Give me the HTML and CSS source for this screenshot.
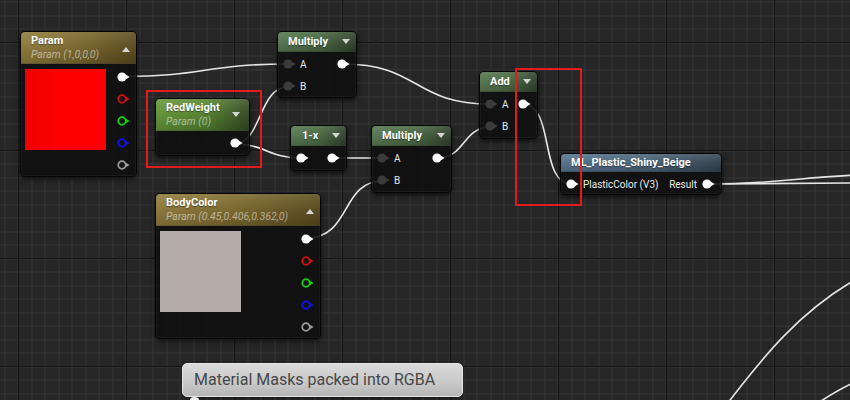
FILE: index.html
```html
<!DOCTYPE html>
<html>
<head>
<meta charset="utf-8">
<link rel="stylesheet" href="styles.css">
</head>
<body>
<div class="graph">
  <svg class="wires" width="850" height="400" viewBox="0 0 850 400">
    <g fill="none" stroke="#e6e6e6" stroke-width="1.6" stroke-linecap="round">
      <path d="M123,76.5 C205,76.5 205,64 288,64"/>
      <path d="M234,144 C262,144 258,87 288,87"/>
      <path d="M234,144 C266,144 268,158 301,158"/>
      <path d="M343,64 C420,64 412,104 491,104"/>
      <path d="M332,158 L383,158"/>
      <path d="M306,238 C352,238 340,181 383,181"/>
      <path d="M437,158 C466,158 462,127 491,127"/>
      <path d="M522,104 C556,104 538,184 572,184"/>
      <path d="M707,184 L860,183"/>
      <path d="M707,184 C780,184 800,177 860,175"/>
      <path d="M724,408 C762,358 800,310 860,277"/>
      <path d="M815,405 C830,395 845,386 860,380"/>
    </g>
  </svg>

  <div class="node big n-param">
    <div class="head tall gold">
      <div class="htext">
        <div class="title">Param</div>
        <div class="sub">Param (1,0,0,0)</div>
      </div>
      <span class="tri up"></span>
    </div>
    <div class="body swatchbody">
      <div class="swatch sw-red"></div>
      <div class="outs">
        <div class="prow"><svg class="pin" viewBox="0 0 13 10" width="13" height="10"><circle cx="5" cy="5" r="4.6" fill="#fff"/><path d="M9 2.8 L12.6 5 L9 7.2Z" fill="#fff"/></svg></div>
        <div class="prow"><svg class="pin" viewBox="0 0 13 10" width="13" height="10"><circle cx="5" cy="5" r="3.8" fill="#141414" stroke="#d01010" stroke-width="1.7"/><path d="M9 2.8 L12.6 5 L9 7.2Z" fill="#d01010"/></svg></div>
        <div class="prow"><svg class="pin" viewBox="0 0 13 10" width="13" height="10"><circle cx="5" cy="5" r="3.8" fill="#141414" stroke="#14d010" stroke-width="1.7"/><path d="M9 2.8 L12.6 5 L9 7.2Z" fill="#14d010"/></svg></div>
        <div class="prow"><svg class="pin" viewBox="0 0 13 10" width="13" height="10"><circle cx="5" cy="5" r="3.8" fill="#141414" stroke="#1010e0" stroke-width="1.7"/><path d="M9 2.8 L12.6 5 L9 7.2Z" fill="#1010e0"/></svg></div>
        <div class="prow"><svg class="pin" viewBox="0 0 13 10" width="13" height="10"><circle cx="5" cy="5" r="3.8" fill="#141414" stroke="#9a9a9a" stroke-width="1.7"/><path d="M9 2.8 L12.6 5 L9 7.2Z" fill="#9a9a9a"/></svg></div>
      </div>
    </div>
  </div>

  <div class="node n-red">
    <div class="head tall green">
      <div class="htext">
        <div class="title">RedWeight</div>
        <div class="sub">Param (0)</div>
      </div>
      <span class="tri down"></span>
    </div>
    <div class="body rows">
      <div class="row"><span class="spacer"></span><svg class="pin" viewBox="0 0 13 10" width="13" height="10"><circle cx="5" cy="5" r="4.6" fill="#fff"/><path d="M9 2.8 L12.6 5 L9 7.2Z" fill="#fff"/></svg></div>
    </div>
  </div>

  <div class="node n-mul1">
    <div class="head math">
      <div class="title">Multiply</div>
      <span class="tri down"></span>
    </div>
    <div class="body rows">
      <div class="row"><svg class="pin" viewBox="0 0 13 10" width="13" height="10"><circle cx="5" cy="5" r="4.6" fill="#3b3b3b"/><path d="M9 2.8 L12.6 5 L9 7.2Z" fill="#3b3b3b"/></svg><span class="lbl">A</span><span class="spacer"></span><svg class="pin" viewBox="0 0 13 10" width="13" height="10"><circle cx="5" cy="5" r="4.6" fill="#fff"/><path d="M9 2.8 L12.6 5 L9 7.2Z" fill="#fff"/></svg></div>
      <div class="row"><svg class="pin" viewBox="0 0 13 10" width="13" height="10"><circle cx="5" cy="5" r="4.6" fill="#3b3b3b"/><path d="M9 2.8 L12.6 5 L9 7.2Z" fill="#3b3b3b"/></svg><span class="lbl">B</span></div>
    </div>
  </div>

  <div class="node n-onex">
    <div class="head math">
      <div class="title">1-x</div>
      <span class="tri down"></span>
    </div>
    <div class="body rows">
      <div class="row"><svg class="pin" viewBox="0 0 13 10" width="13" height="10"><circle cx="5" cy="5" r="4.6" fill="#fff"/><path d="M9 2.8 L12.6 5 L9 7.2Z" fill="#fff"/></svg><span class="spacer"></span><svg class="pin" viewBox="0 0 13 10" width="13" height="10"><circle cx="5" cy="5" r="4.6" fill="#fff"/><path d="M9 2.8 L12.6 5 L9 7.2Z" fill="#fff"/></svg></div>
    </div>
  </div>

  <div class="node n-mul2">
    <div class="head math">
      <div class="title">Multiply</div>
      <span class="tri down"></span>
    </div>
    <div class="body rows">
      <div class="row"><svg class="pin" viewBox="0 0 13 10" width="13" height="10"><circle cx="5" cy="5" r="4.6" fill="#3b3b3b"/><path d="M9 2.8 L12.6 5 L9 7.2Z" fill="#3b3b3b"/></svg><span class="lbl">A</span><span class="spacer"></span><svg class="pin" viewBox="0 0 13 10" width="13" height="10"><circle cx="5" cy="5" r="4.6" fill="#fff"/><path d="M9 2.8 L12.6 5 L9 7.2Z" fill="#fff"/></svg></div>
      <div class="row"><svg class="pin" viewBox="0 0 13 10" width="13" height="10"><circle cx="5" cy="5" r="4.6" fill="#3b3b3b"/><path d="M9 2.8 L12.6 5 L9 7.2Z" fill="#3b3b3b"/></svg><span class="lbl">B</span></div>
    </div>
  </div>

  <div class="node n-add">
    <div class="head math">
      <div class="title">Add</div>
      <span class="tri down"></span>
    </div>
    <div class="body rows">
      <div class="row"><svg class="pin" viewBox="0 0 13 10" width="13" height="10"><circle cx="5" cy="5" r="4.6" fill="#3b3b3b"/><path d="M9 2.8 L12.6 5 L9 7.2Z" fill="#3b3b3b"/></svg><span class="lbl">A</span><span class="spacer"></span><svg class="pin" viewBox="0 0 13 10" width="13" height="10"><circle cx="5" cy="5" r="4.6" fill="#fff"/><path d="M9 2.8 L12.6 5 L9 7.2Z" fill="#fff"/></svg></div>
      <div class="row"><svg class="pin" viewBox="0 0 13 10" width="13" height="10"><circle cx="5" cy="5" r="4.6" fill="#3b3b3b"/><path d="M9 2.8 L12.6 5 L9 7.2Z" fill="#3b3b3b"/></svg><span class="lbl">B</span></div>
    </div>
  </div>

  <div class="node n-ml">
    <div class="head short func">
      <div class="title">ML_Plastic_Shiny_Beige</div>
    </div>
    <div class="body rows">
      <div class="row"><svg class="pin" viewBox="0 0 13 10" width="13" height="10"><circle cx="5" cy="5" r="4.6" fill="#fff"/><path d="M9 2.8 L12.6 5 L9 7.2Z" fill="#fff"/></svg><span class="lbl">PlasticColor (V3)</span><span class="spacer"></span><span class="lbl rl">Result</span><svg class="pin" viewBox="0 0 13 10" width="13" height="10"><circle cx="5" cy="5" r="4.6" fill="#fff"/><path d="M9 2.8 L12.6 5 L9 7.2Z" fill="#fff"/></svg></div>
    </div>
  </div>

  <div class="node big n-body">
    <div class="head tall gold">
      <div class="htext">
        <div class="title">BodyColor</div>
        <div class="sub">Param (0.45,0.406,0.362,0)</div>
      </div>
      <span class="tri up"></span>
    </div>
    <div class="body swatchbody">
      <div class="swatch sw-beige"></div>
      <div class="outs">
        <div class="prow"><svg class="pin" viewBox="0 0 13 10" width="13" height="10"><circle cx="5" cy="5" r="4.6" fill="#fff"/><path d="M9 2.8 L12.6 5 L9 7.2Z" fill="#fff"/></svg></div>
        <div class="prow"><svg class="pin" viewBox="0 0 13 10" width="13" height="10"><circle cx="5" cy="5" r="3.8" fill="#141414" stroke="#d01010" stroke-width="1.7"/><path d="M9 2.8 L12.6 5 L9 7.2Z" fill="#d01010"/></svg></div>
        <div class="prow"><svg class="pin" viewBox="0 0 13 10" width="13" height="10"><circle cx="5" cy="5" r="3.8" fill="#141414" stroke="#14d010" stroke-width="1.7"/><path d="M9 2.8 L12.6 5 L9 7.2Z" fill="#14d010"/></svg></div>
        <div class="prow"><svg class="pin" viewBox="0 0 13 10" width="13" height="10"><circle cx="5" cy="5" r="3.8" fill="#141414" stroke="#1010e0" stroke-width="1.7"/><path d="M9 2.8 L12.6 5 L9 7.2Z" fill="#1010e0"/></svg></div>
        <div class="prow"><svg class="pin" viewBox="0 0 13 10" width="13" height="10"><circle cx="5" cy="5" r="3.8" fill="#141414" stroke="#9a9a9a" stroke-width="1.7"/><path d="M9 2.8 L12.6 5 L9 7.2Z" fill="#9a9a9a"/></svg></div>
      </div>
    </div>
  </div>

  <div class="comment">Material Masks packed into RGBA</div>
  <div class="comment-tail"></div>

  <div class="mark mark-1"></div>
  <div class="mark mark-2"></div>
</div>
</body>
</html>
```

FILE: styles.css
```css
html, body {
  margin: 0;
  padding: 0;
  background: #262626;
}

.graph {
  position: relative;
  width: 850px;
  height: 400px;
  overflow: hidden;
  font-family: Roboto, "Liberation Sans", sans-serif;
  background-color: #262626;
  background-image:
    repeating-linear-gradient(to right, #151515 0 1px, transparent 1px 108px),
    repeating-linear-gradient(to bottom, #151515 0 1px, transparent 1px 108px),
    repeating-linear-gradient(to right, #363636 0 1px, transparent 1px 13.5px),
    repeating-linear-gradient(to bottom, #363636 0 1px, transparent 1px 13.5px);
  background-position: 18px 0, 0 42px, 4.5px 0, 0 1.5px;
}

.wires {
  position: absolute;
  left: 0;
  top: 0;
}

/* ---------- nodes ---------- */
.node {
  position: absolute;
  box-sizing: border-box;
  border: 1px solid #050505;
  border-radius: 5px;
  background: rgba(14, 16, 14, 0.9);
  box-shadow: 0 2px 5px rgba(0, 0, 0, 0.65), inset 0 0 0 1px rgba(255, 255, 255, 0.04);
  overflow: hidden;
  color: #fff;
}

.head {
  box-sizing: border-box;
  display: flex;
  align-items: flex-start;
  height: 20px;
  padding: 3px 6px 0 10px;
  border-bottom: 1px solid rgba(0, 0, 0, 0.35);
}

.head.tall {
  height: 32px;
  padding-top: 2px;
  align-items: flex-start;
}

.head.short {
  height: 18px;
  padding-top: 2px;
}

.htext {
  display: flex;
  flex-direction: column;
}

.title {
  font-weight: 700;
  font-size: 11px;
  line-height: 14px;
  color: #fff;
  white-space: nowrap;
  text-shadow: 0 1px 1px rgba(0, 0, 0, 0.4);
}

.sub {
  font-style: italic;
  font-size: 10.5px;
  line-height: 13px;
  color: rgba(255, 255, 255, 0.5);
  white-space: nowrap;
}

.tri {
  margin-left: auto;
  width: 0;
  height: 0;
  border-left: 4.5px solid transparent;
  border-right: 4.5px solid transparent;
}

.tri.down {
  border-top: 5px solid #d6d6d6;
  margin-top: 4px;
}

.tri.up {
  border-bottom: 5px solid #d6d6d6;
  margin-top: 13px;
}

.n-red .tri.down {
  margin-top: 11px;
  margin-right: 3px;
}

.gold {
  background:
    linear-gradient(to bottom, rgba(255, 240, 190, 0.16) 0%, rgba(255, 240, 190, 0.04) 45%, rgba(0, 0, 0, 0.12) 100%),
    linear-gradient(to right, #8a773a 0%, #75642c 50%, #55471c 100%);
}

.green {
  background:
    linear-gradient(to bottom, rgba(230, 255, 200, 0.18) 0%, rgba(230, 255, 200, 0.05) 45%, rgba(0, 0, 0, 0.12) 100%),
    linear-gradient(to right, #5f9036 0%, #4f7a2c 55%, #2f4520 100%);
}

.math {
  background:
    linear-gradient(to bottom, rgba(220, 255, 210, 0.14) 0%, rgba(220, 255, 210, 0.03) 50%, rgba(0, 0, 0, 0.12) 100%),
    linear-gradient(to right, #557550 0%, #46633f 55%, #2f3f2d 100%);
}

.func {
  background:
    linear-gradient(to bottom, rgba(220, 240, 255, 0.16) 0%, rgba(220, 240, 255, 0.03) 50%, rgba(0, 0, 0, 0.12) 100%),
    linear-gradient(to right, #54708a 0%, #465f74 55%, #313f4c 100%);
}

/* ---------- bodies ---------- */
.rows {
  padding: 1px 6px 1px 5px;
}

.row {
  display: flex;
  align-items: center;
  height: 22px;
}

.pin {
  display: block;
  flex: none;
}

.spacer {
  flex: 1;
}

.lbl {
  font-size: 10px;
  color: #eaeaea;
  margin-left: 4px;
  white-space: nowrap;
}

.lbl.rl {
  margin-left: 0;
  margin-right: 5px;
}

.swatchbody {
  display: flex;
  align-items: flex-start;
  padding: 5px 6px 0 4px;
}

.swatch {
  width: 81px;
  height: 81px;
  flex: none;
}

.sw-red {
  background: linear-gradient(to right, #ee0000, #ff0000 40%);
}

.sw-beige {
  background: #b4aca7;
}

.outs {
  margin-left: auto;
  margin-top: -3px;
  display: flex;
  flex-direction: column;
}

.prow {
  height: 22px;
  display: flex;
  align-items: center;
}

/* ---------- node placement on the canvas ---------- */
.n-param { left: 20px; top: 31px; width: 117px; height: 146px; }
.n-red   { left: 155px; top: 98px; width: 95px; height: 58px; }
.n-mul1  { left: 277px; top: 31px; width: 80px; height: 67px; }
.n-onex  { left: 290px; top: 125px; width: 57px; height: 46px; }
.n-mul2  { left: 371px; top: 125px; width: 81px; height: 68px; }
.n-add   { left: 479px; top: 71px; width: 59px; height: 68px; }
.n-ml    { left: 560px; top: 153px; width: 162px; height: 42px; }
.n-body  { left: 155px; top: 193px; width: 166px; height: 146px; }

.n-onex .head { padding-left: 11px; }
.n-red .head { padding-left: 10px; }

/* ---------- comment ---------- */
.comment {
  position: absolute;
  left: 182px;
  top: 363px;
  width: 281px;
  height: 34px;
  box-sizing: border-box;
  padding: 6px 0 0 11px;
  border-radius: 5px;
  border: 1px solid #e6e6e6;
  background: linear-gradient(to bottom, #dadada 0%, #c8c8c8 60%, #b6b6b6 100%);
  box-shadow: 0 1px 3px rgba(0, 0, 0, 0.5);
  font-size: 16px;
  line-height: 20px;
  color: #474747;
  white-space: nowrap;
}

.comment-tail {
  position: absolute;
  left: 190px;
  top: 397px;
  width: 9px;
  height: 6px;
  border-radius: 50%;
  background: #f2f2f2;
}

/* ---------- red highlight boxes ---------- */
.mark {
  position: absolute;
  box-sizing: border-box;
  border: 2px solid #e21c1c;
}

.mark-1 { left: 146px; top: 90px; width: 116px; height: 78px; }
.mark-2 { left: 515px; top: 68px; width: 67px; height: 138px; }
```
